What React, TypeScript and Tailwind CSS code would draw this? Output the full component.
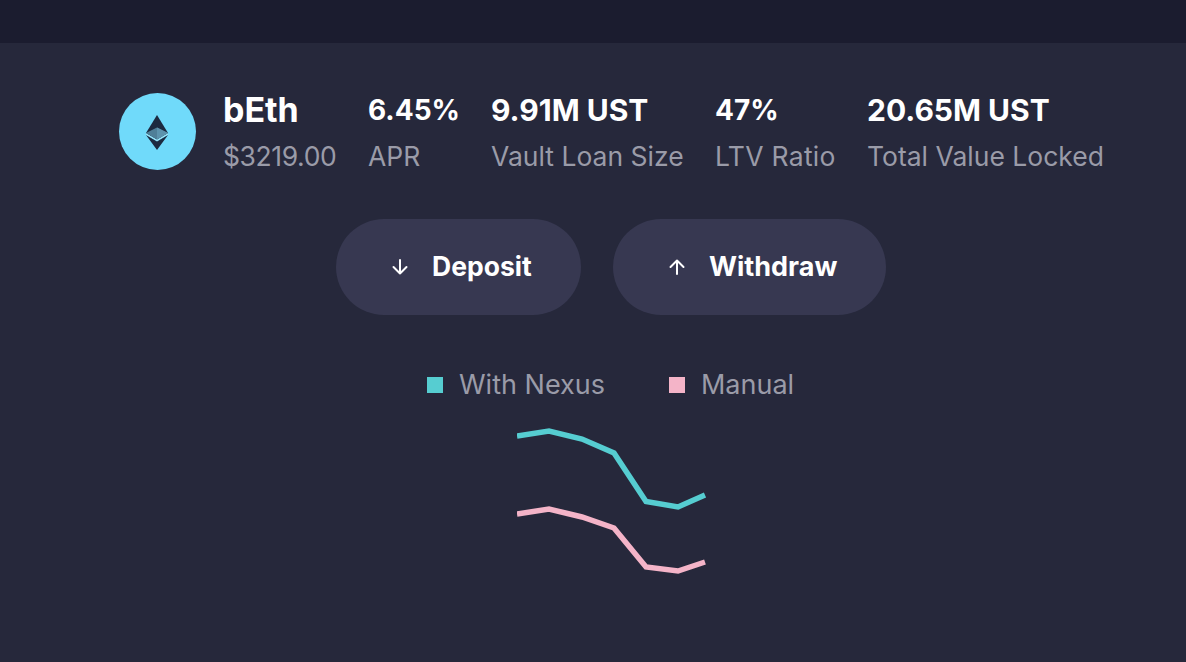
function Stat({ value, label, valueClass, labelClass = "", width }: { value: string; label: string; valueClass: string; labelClass?: string; width: string }) {
  return (
    <div className={`flex flex-col pt-[1px] ${width}`}>
      <span className={`h-[32px] leading-[32px] font-bold text-white whitespace-nowrap ${valueClass}`}>{value}</span>
      <span className={`mt-[14px] text-[26.5px] leading-[32px] text-[#9a9ba8] whitespace-nowrap ${labelClass}`}>{label}</span>
    </div>
  )
}

function EthLogo() {
  return (
    <div className="flex h-[77px] w-[77px] shrink-0 items-center justify-center rounded-full bg-[#70dafa]">
      <svg className="mr-[2px] mt-[2px]" width="22" height="35" viewBox="0 0 22 35">
        <path d="M11 0 L22 18 L11 24.5 L0 18 Z" fill="#1c2a40" />
        <path d="M11 12.5 L22 18 L11 24.5 L0 18 Z" fill="#4f7f98" />
        <path d="M11 12.5 L22 18 L11 24.5 Z" fill="#5d93ad" />
        <path d="M0 20 L11 26.5 L22 20 L11 35 Z" fill="#1c2a40" />
        <path d="M0 19 L11 25.5 L22 19" fill="none" stroke="#a9e3f2" strokeWidth="1" />
      </svg>
    </div>
  )
}

function ActionButton({ label, up, width, textClass }: { label: string; up?: boolean; width: string; textClass: string }) {
  return (
    <button type="button" className={`flex h-[96px] items-center gap-[23px] rounded-[48px] bg-[#373851] pl-[55px] ${width}`}>
      <svg width="18" height="18" viewBox="0 0 18 18" fill="none" stroke="white" strokeWidth="2" strokeLinecap="round" strokeLinejoin="round">
        {up ? <path d="M9 16 V2.5 M2.5 9 L9 2.5 L15.5 9" /> : <path d="M9 2 V15.5 M2.5 9 L9 15.5 L15.5 9" />}
      </svg>
      <span className={`font-bold text-white ${textClass}`}>{label}</span>
    </button>
  )
}

function Legend({ label, color }: { label: string; color: string }) {
  return (
    <div className="flex items-center gap-[16px]">
      <span className={`h-[16px] w-[16px] ${color}`} />
      <span className="text-[27px] leading-[32px] text-[#9a9ba8]">{label}</span>
    </div>
  )
}

export default function App() {
  return (
    <div className="flex h-[662px] w-[1186px] flex-col overflow-hidden bg-[#26283b] font-['Inter',sans-serif]">
      <div className="h-[43px] shrink-0 bg-[#1b1c2f]" />

      <div className="mt-[50px] flex items-start pl-[119px]">
        <EthLogo />
        <div className="ml-[27px] flex gap-[33px]">
          <Stat value="bEth" label="$3219.00" valueClass="text-[34px]" labelClass="tracking-[-0.4px]" width="w-[112px]" />
          <Stat value="6.45%" label="APR" valueClass="text-[28px]" width="w-[90px]" />
          <Stat value="9.91M UST" label="Vault Loan Size" valueClass="text-[30px]" width="w-[191px]" />
          <Stat value="47%" label="LTV Ratio" valueClass="text-[28px]" labelClass="tracking-[0.3px]" width="w-[119px]" />
          <Stat value="20.65M UST" label="Total Value Locked" valueClass="text-[30px]" width="w-[236px]" />
        </div>
      </div>

      <div className="mt-[47px] flex gap-[32px] pl-[336px]">
        <ActionButton label="Deposit" width="w-[245px]" textClass="text-[26.5px]" />
        <ActionButton label="Withdraw" up width="w-[273px]" textClass="text-[27px]" />
      </div>

      <div className="mt-[54px] flex gap-[64px] pl-[427px]">
        <Legend label="With Nexus" color="bg-[#56cdd1]" />
        <Legend label="Manual" color="bg-[#f4b4c8]" />
      </div>

      <div className="mt-[24px] pl-[517px]">
        <svg width="190" height="150" viewBox="517 425 190 150" fill="none" strokeWidth="5.5">
          <polyline points="517,436 549,431 582,439 614,453 646,501.5 678,507 705,495" stroke="#56cdd1" />
          <polyline points="517,514 549,509 582,517 614,528 646,567 678,571 705,562" stroke="#f4b4c8" />
        </svg>
      </div>
    </div>
  )
}
